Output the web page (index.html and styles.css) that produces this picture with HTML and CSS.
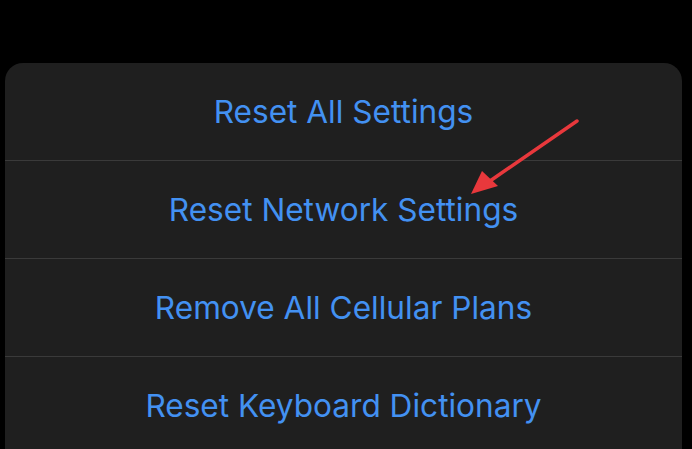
FILE: index.html
```html
<!DOCTYPE html>
<html>
<head>
<meta charset="utf-8">
<link rel="stylesheet" href="styles.css">
</head>
<body>
<div class="sheet">
  <div class="row">Reset All Settings</div>
  <div class="row">Reset Network Settings</div>
  <div class="row">Remove All Cellular Plans</div>
  <div class="row">Reset Keyboard Dictionary</div>
</div>
<svg class="arrow" width="692" height="449" viewBox="0 0 692 449">
  <line x1="577" y1="121" x2="490" y2="181" stroke="#e8383c" stroke-width="3.5" stroke-linecap="round"/>
  <polygon points="471,194 482,171 498,186" fill="#e8383c"/>
</svg>
</body>
</html>
```
FILE: styles.css
```css
html, body {
  margin: 0;
  padding: 0;
  background: #000;
  width: 692px;
  height: 449px;
  overflow: hidden;
}
.sheet {
  margin: 63px 10px 0 5px;
  background: #1f1f1f;
  border-radius: 18px 18px 0 0;
  height: 400px;
  display: flex;
  flex-direction: column;
}
.row {
  height: 97px;
  flex: none;
  display: flex;
  align-items: center;
  justify-content: center;
  font-family: Inter, "Liberation Sans", sans-serif;
  font-size: 31.6px;
  color: #4391f2;
  border-bottom: 1px solid #3a3a3a;
}
.row:last-child {
  border-bottom: none;
}
.arrow {
  position: absolute;
  left: 0;
  top: 0;
}
```
